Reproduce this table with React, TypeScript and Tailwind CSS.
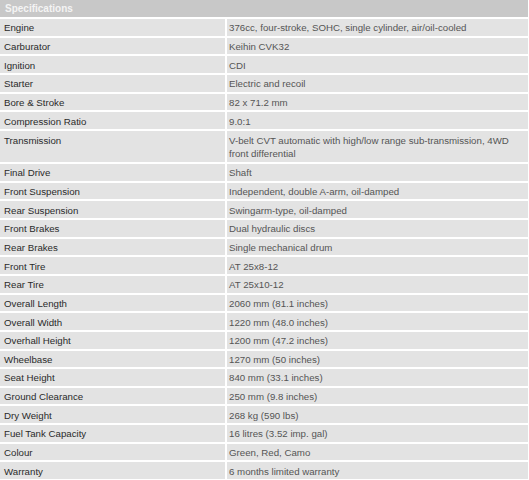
const specs: [string, string][] = [
  ["Engine", "376cc, four-stroke, SOHC, single cylinder, air/oil-cooled"],
  ["Carburator", "Keihin CVK32"],
  ["Ignition", "CDI"],
  ["Starter", "Electric and recoil"],
  ["Bore & Stroke", "82 x 71.2 mm"],
  ["Compression Ratio", "9.0:1"],
  ["Transmission", "V-belt CVT automatic with high/low range sub-transmission, 4WD front differential"],
  ["Final Drive", "Shaft"],
  ["Front Suspension", "Independent, double A-arm, oil-damped"],
  ["Rear Suspension", "Swingarm-type, oil-damped"],
  ["Front Brakes", "Dual hydraulic discs"],
  ["Rear Brakes", "Single mechanical drum"],
  ["Front Tire", "AT 25x8-12"],
  ["Rear Tire", "AT 25x10-12"],
  ["Overall Length", "2060 mm (81.1 inches)"],
  ["Overall Width", "1220 mm (48.0 inches)"],
  ["Overhall Height", "1200 mm (47.2 inches)"],
  ["Wheelbase", "1270 mm (50 inches)"],
  ["Seat Height", "840 mm (33.1 inches)"],
  ["Ground Clearance", "250 mm (9.8 inches)"],
  ["Dry Weight", "268 kg (590 lbs)"],
  ["Fuel Tank Capacity", "16 litres (3.52 imp. gal)"],
  ["Colour", "Green, Red, Camo"],
  ["Warranty", "6 months limited warranty"],
];

export default function App() {
  return (
    <div className="h-[480px] w-[529px] overflow-hidden bg-white font-['Liberation_Sans',Arial,sans-serif] text-[9.7px]">
      <div className="flex w-[528px] flex-col gap-[2px]">
        <div className="flex h-[17px] items-center bg-[#c8c8c8] pl-[5px] text-[10px] font-bold text-[#f4f4f4]">
          Specifications
        </div>
        {specs.map(([label, value]) => {
          const tall = label === "Transmission";
          return (
            <div
              key={label}
              className={
                tall
                  ? "flex h-[31px] gap-[2px] leading-[13px]"
                  : "flex h-[16.67px] gap-[2px] leading-[13px]"
              }
            >
              <div
                className={
                  tall
                    ? "w-[225px] shrink-0 bg-[#e3e3e3] pl-[4px] pt-[3px] text-[#2a2a2a]"
                    : "flex w-[225px] shrink-0 items-center bg-[#e3e3e3] pl-[4px] pt-[1px] text-[#2a2a2a]"
                }
              >
                {label}
              </div>
              <div
                className={
                  tall
                    ? "flex-1 bg-[#e3e3e3] pl-[2px] pr-[14px] pt-[3px] text-[#555]"
                    : "flex flex-1 items-center bg-[#e3e3e3] pl-[2px] pt-[1px] text-[#555]"
                }
              >
                {value}
              </div>
            </div>
          );
        })}
      </div>
    </div>
  );
}
